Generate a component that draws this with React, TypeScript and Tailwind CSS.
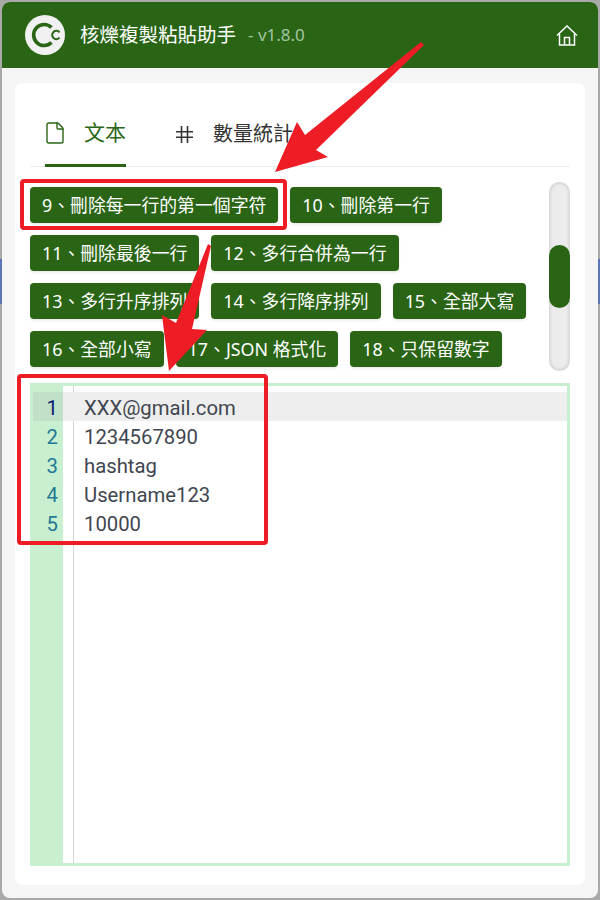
import { File } from 'lucide-react'

const CJK = "font-['Noto_Sans','Noto_Sans_CJK_TC',sans-serif]"

const ACTIONS = [
  '9、刪除每一行的第一個字符',
  '10、刪除第一行',
  '11、刪除最後一行',
  '12、多行合併為一行',
  '13、多行升序排列',
  '14、多行降序排列',
  '15、全部大寫',
  '16、全部小寫',
  '17、JSON 格式化',
  '18、只保留數字',
]

const LINES = ['XXX@gmail.com', '1234567890', 'hashtag', 'Username123', '10000']

function Logo() {
  return (
    <svg width="40" height="40" viewBox="0 0 40 40">
      <circle cx="20" cy="20" r="20" fill="#f1f1f1" />
      <path d="M26.5 12.5a10.5 10.5 0 1 0 0 15" fill="none" stroke="#2a6516" strokeWidth="3.6" />
      <path d="M34.6 17.3a4.2 4.2 0 1 0 0 5.4" fill="none" stroke="#2a6516" strokeWidth="2" />
    </svg>
  )
}

function HomeIcon() {
  return (
    <svg width="22" height="21" viewBox="0 0 22 21" fill="none" stroke="#fff" strokeWidth="1.5">
      <path d="M1 10.5 11 1l10 9.5" />
      <path d="M3.5 9v11h15V9" />
      <path d="M8.5 20v-7.5h5V20" />
    </svg>
  )
}

function HashIcon() {
  return (
    <svg width="17" height="17" viewBox="0 0 17 17" fill="none" stroke="#333333" strokeWidth="1.6">
      <path d="M5.5 0v17M11.5 0v17M0 5.8h17M0 11.2h17" />
    </svg>
  )
}

function Annotations() {
  return (
    <svg className="absolute left-0 top-0 pointer-events-none" width="600" height="900" viewBox="0 0 600 900">
      <rect x="22" y="181" width="263" height="47" rx="2" fill="none" stroke="#ee1c25" strokeWidth="4" />
      <rect x="19" y="376" width="247" height="167" rx="2" fill="none" stroke="#ee1c25" strokeWidth="4" />
      <polygon points="421,42 424,45 316,150 328,157 275,172 297,122 305,135" fill="#ee1c25" />
      <polygon points="208,244 211,246 192,329 207,330 169,371 162,315 176,323" fill="#ee1c25" />
    </svg>
  )
}

export default function App() {
  return (
    <div className={`relative w-[600px] h-[900px] overflow-hidden px-[2px] pt-[2px] bg-[linear-gradient(to_bottom,#a9a9a9_259px,#5b77b5_259px,#5b77b5_304px,#a9a9a9_304px)] ${CJK}`}>
      <div className="flex flex-col h-[896px] rounded-lg overflow-hidden bg-[#f5f5f5]">
        {/* header */}
        <div className="flex items-center h-[66px] shrink-0 bg-[#2a6516] pl-[23px] pr-[20px]">
          <Logo />
          <span className="ml-[15px] text-[19.5px] text-white">核爍複製粘貼助手</span>
          <span className="ml-[12px] text-[17px] text-[#a3c4a0]">- v1.8.0</span>
          <div className="ml-auto flex">
            <HomeIcon />
          </div>
        </div>

        {/* card */}
        <div className="flex-1 flex flex-col mx-[13px] mt-[15px] mb-[13px] rounded-lg bg-white px-[15px] pb-[19px] min-h-0">
          <div className="flex h-[84px] shrink-0 border-b border-[#eeeeee] pl-[15px]">
            <div className="flex items-center h-[84px] pt-[18px] w-[81px] border-b-[3px] border-[#2a6516] text-[#2a6516]">
              <File size={24} strokeWidth={1.4} className="ml-[-2px]" />
              <span className="ml-[17px] text-[21px]">文本</span>
            </div>
            <div className="flex items-center h-[84px] pt-[18px] ml-[50px] text-[#333333]">
              <HashIcon />
              <span className="ml-[20px] text-[20px]">數量統計</span>
            </div>
          </div>

          {/* action buttons */}
          <div className="flex mt-[15px] h-[189px] shrink-0">
            <div className="flex-1 flex flex-wrap content-start gap-x-3 gap-y-3 pt-[5px] overflow-hidden">
              {ACTIONS.map(a => (
                <button key={a} className="h-[36px] px-3 rounded-[4px] bg-[#2a6516] text-white text-[17.85px] leading-[36px] whitespace-nowrap shadow-[0_2px_3px_rgba(0,0,0,0.08)]">
                  {a}
                </button>
              ))}
            </div>
            <div className="w-[21px] shrink-0 ml-[9px] rounded-full bg-[#ececec] shadow-[inset_0_0_4px_rgba(0,0,0,0.2)] pt-[63px]">
              <div className="h-[63px] rounded-full bg-[#2a6516]" />
            </div>
          </div>

          {/* editor */}
          <div className="flex-1 flex mt-[12px] border-[3px] border-[#c8f0d0] font-['Roboto',sans-serif] text-[20.3px] leading-[29px] min-h-0">
            <div className="w-[30px] shrink-0 bg-[#c8f0d0] pt-[6px] text-[#237893] text-right">
              {LINES.map((_, i) => (
                <div key={i} className={i === 0 ? 'h-[29px] pr-[5px] pt-[2px] bg-[#c0e0c8] text-[#0b216f]' : 'h-[29px] pr-[5px] pt-[2px]'}>
                  {i + 1}
                </div>
              ))}
            </div>
            <div className="relative flex-1 pt-[6px] text-[#3f4650]">
              <div className="absolute left-[10px] top-0 bottom-0 w-px bg-[#d4d4d4]" />
              {LINES.map((l, i) => (
                <div key={i} className={i === 0 ? 'relative h-[29px] pl-[21px] pt-[2px] bg-[#eeeeee]' : 'relative h-[29px] pl-[21px] pt-[2px]'}>
                  {l}
                </div>
              ))}
            </div>
          </div>
        </div>
      </div>
      <Annotations />
    </div>
  )
}
